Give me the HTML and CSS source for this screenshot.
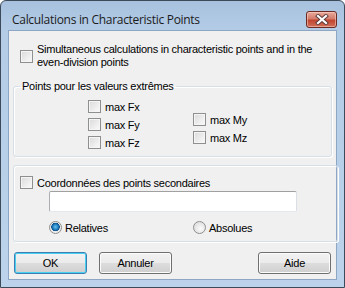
FILE: index.html
```html
<!DOCTYPE html>
<html lang="en">
<head>
    <meta charset="UTF-8">
    <title>Calculations in Characteristic Points</title>
    <link rel="stylesheet" href="styles.css">
</head>
<body>
    <div class="window">
        <div class="titlebar">
            <span class="title">Calculations in Characteristic Points</span>
            <button class="close-btn" aria-label="Close">
                <svg width="14" height="11" viewBox="0 0 14 11">
                    <path d="M3 2 L11 9 M11 2 L3 9" stroke="#5a3a3a" stroke-width="4" stroke-linecap="square"/>
                    <path d="M3 2 L11 9 M11 2 L3 9" stroke="#ffffff" stroke-width="2.2" stroke-linecap="square"/>
                </svg>
            </button>
        </div>

        <div class="client">
            <label class="check top-check">
                <span class="box"></span>
                <span class="label-text">Simultaneous calculations in characteristic points and in the<br>even-division points</span>
            </label>

            <fieldset class="group group-extremes">
                <legend>Points pour les valeurs extrêmes</legend>
                <div class="extreme-cols">
                    <div class="col col-f">
                        <label class="check"><span class="box"></span>max Fx</label>
                        <label class="check"><span class="box"></span>max Fy</label>
                        <label class="check"><span class="box"></span>max Fz</label>
                    </div>
                    <div class="col col-m">
                        <label class="check"><span class="box"></span>max My</label>
                        <label class="check"><span class="box"></span>max Mz</label>
                    </div>
                </div>
            </fieldset>

            <fieldset class="group group-coords">
                <label class="check"><span class="box"></span>Coordonnées des points secondaires</label>
                <div class="textbox"></div>
                <div class="radios">
                    <label class="radio checked"><span class="dot"></span>Relatives</label>
                    <label class="radio"><span class="dot"></span>Absolues</label>
                </div>
            </fieldset>

            <div class="buttons">
                <button class="btn default">OK</button>
                <button class="btn">Annuler</button>
                <button class="btn help">Aide</button>
            </div>
        </div>
    </div>
</body>
</html>
```

FILE: styles.css
```css
body {
    margin: 0;
    background: #ffffff;
    font-family: "Liberation Sans", Arial, sans-serif;
    font-size: 11px;
    letter-spacing: -0.25px;
    color: #000000;
}
.window {
    width: 345px;
    height: 288px;
    box-sizing: border-box;
    border: 1px solid #3d4a59;
    border-radius: 6px 6px 0 0;
    background: linear-gradient(#a7c1de 0px, #b4cce6 30px, #bcd3eb 100%);
    display: flex;
    flex-direction: column;
    padding: 0 7px 7px 7px;
}
.titlebar {
    height: 29px;
    display: flex;
    align-items: center;
}
.title {
    font-family: "Open Sans", "Noto Sans", sans-serif;
    font-size: 12px;
    color: #1b1b1b;
    margin-left: 4px;
    margin-top: 8px;
    letter-spacing: -0.3px;
}
.close-btn {
    margin-left: auto;
    margin-top: 8px;
    width: 31px;
    height: 17px;
    padding: 0;
    border: 1px solid #6b2a22;
    border-radius: 3px;
    background: linear-gradient(#e9a99b 0%, #d47c6b 45%, #c0452f 55%, #d0705a 100%);
    box-shadow: inset 0 0 0 1px rgba(255, 220, 210, 0.5);
    display: flex;
    align-items: center;
    justify-content: center;
}
.client {
    flex: 1;
    background: #f0f0f0;
    border: 1px solid #8da6c3;
    display: flex;
    flex-direction: column;
    padding: 0 4px;
}
.check {
    display: flex;
    align-items: center;
    gap: 4px;
    height: 13px;
    white-space: nowrap;
}
.box {
    width: 11px;
    height: 11px;
    border: 1px solid #8e8f8f;
    background: linear-gradient(135deg, #d9d9d9 0%, #eeeeee 60%, #fbfbfb 100%);
    box-shadow: inset 0 0 0 1px #f5f5f5;
    flex: none;
}
.top-check {
    height: 26px;
    margin: 12px 0 0 7px;
}
.label-text {
    line-height: 13px;
    white-space: normal;
}
.group {
    margin: 0;
    border: 1px solid #d5dfe5;
    border-radius: 3px;
    box-shadow: inset 1px 1px 0 #ffffff, 1px 1px 0 #ffffff;
    padding: 0;
}
.group legend {
    padding: 0 2px;
    margin-left: 6px;
    line-height: 13px;
}
.group-extremes {
    margin-top: 11px;
    height: 77px;
    box-sizing: border-box;
}
.extreme-cols {
    display: flex;
    padding: 7px 0 0 74px;
}
.col {
    display: flex;
    flex-direction: column;
    gap: 5px;
}
.col-f {
    width: 105px;
}
.col-m {
    padding-top: 13px;
}
.group-coords {
    margin-top: 8px;
    height: 77px;
    box-sizing: border-box;
    padding: 10px 0 0 6px;
}
.textbox {
    margin: 2px 0 0 29px;
    width: 246px;
    height: 19px;
    background: #ffffff;
    border: 1px solid #abadb3;
    border-top-color: #a0a0a0;
    border-bottom-color: #e3e9ef;
    border-right-color: #dbdfe6;
    border-radius: 2px;
}
.radios {
    display: flex;
    margin: 9px 0 0 29px;
}
.radio {
    display: flex;
    align-items: center;
    gap: 3px;
    width: 144px;
    height: 13px;
}
.dot {
    width: 11px;
    height: 11px;
    border-radius: 50%;
    border: 1px solid #8e8f8f;
    background: radial-gradient(circle at 60% 60%, #fbfbfb 0%, #dcdcdc 80%);
    flex: none;
}
.radio.checked .dot {
    background: radial-gradient(circle at 50% 45%, #67c6f2 0px, #1a76b8 3px, #0e4f86 4px, #e9e9e9 4.5px, #f4f4f4 100%);
}
.buttons {
    display: flex;
    gap: 12px;
    margin-top: 10px;
    padding-left: 1px;
}
.btn {
    width: 73px;
    height: 22px;
    font-family: "Liberation Sans", Arial, sans-serif;
    font-size: 11px;
    letter-spacing: -0.25px;
    color: #000000;
    border: 1px solid #707070;
    border-radius: 3px;
    background: linear-gradient(#f2f2f2 0%, #ebebeb 49%, #dddddd 51%, #cfcfcf 100%);
    box-shadow: inset 0 0 0 1px #fcfcfc;
    padding: 0;
}
.btn.default {
    border-color: #3c7fb1;
    box-shadow: inset 0 0 0 1px #48d0f4;
}
.btn.help {
    margin-left: auto;
    margin-right: 1px;
}
```
